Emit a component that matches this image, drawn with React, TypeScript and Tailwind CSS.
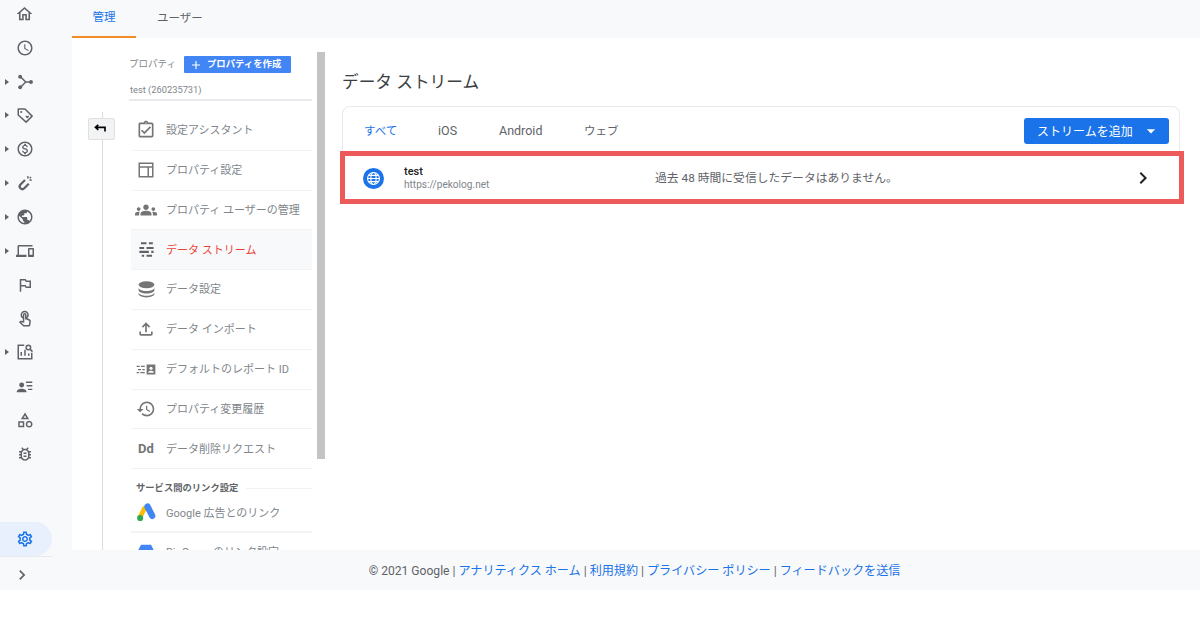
import type { ReactNode } from "react";
import {
  MdAccessTime,
  MdAdd,
  MdArrowDropDown,
  MdChevronRight,
  MdGroups,
  MdHistory,
  MdOutlineAssignmentTurnedIn,
  MdOutlineBugReport,
  MdOutlineCategory,
  MdOutlineDevices,
  MdOutlineFileUpload,
  MdOutlineHome,
  MdOutlineMonetizationOn,
  MdOutlineOutlinedFlag,
  MdOutlineSettings,
  MdOutlineTouchApp,
  MdPublic,
} from "react-icons/md";

const fontStack = "font-['Roboto','Noto_Sans_CJK_JP',sans-serif]";

function BranchIcon() {
  return (
    <svg viewBox="0 0 24 24" className="size-[18px]" fill="none" stroke="#5f6368" strokeWidth="2">
      <path d="M6 5l7 7-7 7M13 12h7" />
      <circle cx="5.500" cy="5" r="2.600" fill="#5f6368" stroke="none" />
      <circle cx="5.500" cy="19" r="2.600" fill="#5f6368" stroke="none" />
      <circle cx="20" cy="12" r="2.600" fill="#5f6368" stroke="none" />
    </svg>
  );
}

function TagIcon() {
  return (
    <svg viewBox="0 0 24 24" className="size-[18px]" fill="none" stroke="#5f6368" strokeWidth="2">
      <path d="M3 4h9l9.500 9.500-8 8L3 12z" strokeLinejoin="round" />
      <circle cx="7" cy="8" r="1.400" fill="#5f6368" stroke="none" />
      <path d="M13.500 12.500l1.500 1 1.500-1 1 1.500-2.500 2.500-2.500-2.500z" fill="#5f6368" stroke="none" />
    </svg>
  );
}

function MagnetIcon() {
  return (
    <svg viewBox="0 0 24 24" className="size-[18px]" fill="none" stroke="#5f6368" strokeWidth="3">
      <path d="M12 8l-6 6a3.500 3.500 0 0 0 5 5l6-6" />
      <path d="M15.500 3l.8 3M21 8.500l-3-.8M20 4l-1.500 1.500" strokeWidth="2" />
    </svg>
  );
}

function ReportSearchIcon() {
  return (
    <svg viewBox="0 0 24 24" className="size-[18px]" fill="none" stroke="#5f6368" strokeWidth="2">
      <path d="M11 3H3v18h18v-8" />
      <path d="M7 17v-5M12 17V9M17 17v-3" />
      <circle cx="16.500" cy="6" r="3" />
      <path d="M19 8.500l3 3" />
    </svg>
  );
}

function AudienceIcon() {
  return (
    <svg viewBox="0 0 24 24" className="size-[17px]" fill="#5f6368">
      <circle cx="8" cy="10" r="3.500" />
      <path d="M1 20c0-3.500 3.500-5 7-5s7 1.500 7 5zM14 5h9v2h-9zM15 10h8v2h-8zM17 15h6v2h-6z" />
    </svg>
  );
}

function LayoutIcon() {
  return (
    <svg viewBox="0 0 24 24" className="size-[18px]" fill="none" stroke="#757575" strokeWidth="2">
      <path d="M3 3h18v18H3zM3 8h18M15 8v13" />
    </svg>
  );
}

function StreamIcon() {
  return (
    <svg viewBox="0 0 24 24" className="size-[19px]" fill="none" stroke="#5f6368" strokeWidth="2.600">
      <path d="M5 4h7M15 4h5M3 10h6M12 10h9M3 15h12M18 15h3M6 20h3M12 20h7" />
    </svg>
  );
}

function DatabaseIcon() {
  return (
    <svg viewBox="0 0 24 24" className="size-[19px]" fill="#757575">
      <ellipse cx="12" cy="6" rx="10" ry="4.500" />
      <path d="M2 9.500c0 2.500 4.500 4.500 10 4.500s10-2 10-4.500v3c0 2.500-4.500 4.500-10 4.500S2 15 2 12.500z" />
      <path d="M2 15.500c0 2.500 4.500 4.500 10 4.500s10-2 10-4.500v2c0 2.800-4.500 4.500-10 4.500S2 20.300 2 17.500z" />
    </svg>
  );
}

function ReportIdIcon() {
  return (
    <svg viewBox="0 0 32 24" className="h-[15px] w-[20px]" fill="#757575">
      <path d="M1 6h5v2H1zM8 6h6v2H8zM3 11h5v2H3zM10 11h4v2h-4zM1 16h4v2H1zM7 16h7v2H7z" />
      <path d="M17 4h14v16H17z" />
      <circle cx="24" cy="10" r="2.500" fill="#fff" />
      <path d="M19.500 17c0-2 2.500-3 4.500-3s4.500 1 4.500 3z" fill="#fff" />
    </svg>
  );
}

function AdsIcon() {
  return (
    <svg viewBox="0 0 24 24" className="size-[20px]">
      <path d="M8.500 3.500l-6.500 13 5 2.500 6.500-13z" fill="#fbbc04" />
      <path d="M10 5.500a4 4 0 0 1 7-3.500l6 12a3.800 3.800 0 0 1-6.500 3.800z" fill="#4285f4" />
      <circle cx="5" cy="18" r="3.700" fill="#34a853" />
    </svg>
  );
}

function BigQueryIcon() {
  return (
    <svg viewBox="0 0 24 24" className="size-[20px]">
      <path d="M6 2h12l5 10-5 10H6L1 12z" fill="#4285f4" />
    </svg>
  );
}

function GlobeBadge() {
  return (
    <svg viewBox="0 0 24 24" className="size-[21px]" fill="none">
      <circle cx="12" cy="12" r="12" fill="#1a73e8" />
      <g stroke="#fff" strokeWidth="1.300">
        <circle cx="12" cy="12" r="6.800" />
        <ellipse cx="12" cy="12" rx="3" ry="6.800" />
        <path d="M5.200 12h13.600M6.200 8.500h11.600M6.200 15.500h11.600" />
      </g>
    </svg>
  );
}

type SideItem = { icon: ReactNode; expand?: boolean };

const sideClass = "size-[18px] text-[#5f6368]";

const sideItems: SideItem[] = [
  { icon: <MdOutlineHome className="size-[20px] text-[#5f6368]" /> },
  { icon: <MdAccessTime className={sideClass} /> },
  { icon: <BranchIcon />, expand: true },
  { icon: <TagIcon />, expand: true },
  { icon: <MdOutlineMonetizationOn className={sideClass} />, expand: true },
  { icon: <MagnetIcon />, expand: true },
  { icon: <MdPublic className={sideClass} />, expand: true },
  { icon: <MdOutlineDevices className={sideClass} />, expand: true },
  { icon: <MdOutlineOutlinedFlag className={sideClass} /> },
  { icon: <MdOutlineTouchApp className={sideClass} /> },
  { icon: <ReportSearchIcon />, expand: true },
  { icon: <AudienceIcon /> },
  { icon: <MdOutlineCategory className={sideClass} /> },
  { icon: <MdOutlineBugReport className={sideClass} /> },
];

const navClass = "size-[20px] text-[#757575]";

const navItems: { label: string; icon: ReactNode; active?: boolean }[] = [
  { label: "設定アシスタント", icon: <MdOutlineAssignmentTurnedIn className={navClass} /> },
  { label: "プロパティ設定", icon: <LayoutIcon /> },
  { label: "プロパティ ユーザーの管理", icon: <MdGroups className="size-[22px] text-[#757575]" /> },
  { label: "データ ストリーム", icon: <StreamIcon />, active: true },
  { label: "データ設定", icon: <DatabaseIcon /> },
  { label: "データ インポート", icon: <MdOutlineFileUpload className={navClass} /> },
  { label: "デフォルトのレポート ID", icon: <ReportIdIcon /> },
  { label: "プロパティ変更履歴", icon: <MdHistory className={navClass} /> },
  {
    label: "データ削除リクエスト",
    icon: <span className="text-[13px] font-bold text-[#757575]">Dd</span>,
  },
];

function Sidebar() {
  return (
    <aside className="flex h-full w-[72px] shrink-0 flex-col">
      <div className="-mt-[3px] flex flex-col">
        {sideItems.map((item, i) => (
          <div key={i} className="relative flex h-[33.850px] items-center pl-[15px]">
            {item.expand && (
              <span className="absolute left-[5px] h-0 w-0 border-y-[3.500px] border-l-[4px] border-y-transparent border-l-[#5f6368]" />
            )}
            <span className="flex w-[19px] items-center justify-center">{item.icon}</span>
          </div>
        ))}
      </div>
      <div className="mt-auto">
        <div className="flex h-[34px] w-[52px] items-center rounded-r-[17px] bg-[#e8f0fe] pl-[16px]">
          <MdOutlineSettings className="size-[18px] text-[#1a73e8]" />
        </div>
        <div className="flex h-[34px] w-[52px] items-center border-t border-[#e8eaed] pl-[12px] pt-[3px]">
          <MdChevronRight className="size-[20px] text-[#5f6368]" />
        </div>
      </div>
    </aside>
  );
}

function PropertyNav() {
  return (
    <div className="relative flex w-[254px] shrink-0 overflow-hidden">
      {/* vertical rail and back button sit over the column */}
      <div className="absolute bottom-0 left-[30px] top-[74px] w-px bg-[#dadce0]" />
      <button className="absolute left-[16px] top-[80px] flex h-[22px] w-[27px] items-center justify-center rounded-[2px] border border-[#e0e0e0] bg-[#f1f3f4] pr-[3px]">
        <svg viewBox="0 0 16 12" className="h-[10px] w-[14px]" fill="none" stroke="#000" strokeWidth="2">
          <path d="M15 4H3M6 1L2.500 4 6 7M14 3.500V9" />
        </svg>
      </button>
      <div className="absolute right-[1px] top-[14px] h-[407px] w-[8px] bg-[#c4c4c4]" />

      <div className="ml-[57px] w-[183px] pt-[18px]">
        <div className="flex items-center">
          <span className="text-[9.500px] text-[#80868b]">プロパティ</span>
          <button className="ml-[8px] flex h-[17px] w-[107px] items-center rounded-[1px] bg-[#4285f4] pl-[5px] text-[9.400px] font-bold text-white">
            <MdAdd className="mr-[4px] size-[14px]" />
            プロパティを作成
          </button>
        </div>
        <div className="mt-[10px] h-[18px] border-b-2 border-[#e8eaed] pl-px text-[9.300px] leading-[14px] text-[#80868b]">
          test (260235731)
        </div>
        <ul className="ml-[2px] mt-[10px]">
          {navItems.map((item) => (
            <li
              key={item.label}
              className={`flex h-[39.800px] items-center border-b border-[#f1f3f4] ${item.active ? "bg-[#f8f9fa]" : ""}`}
            >
              <span className="flex w-[35px] justify-center pr-[5px]">{item.icon}</span>
              <span
                className={`pt-[2px] text-[11px] ${item.active ? "text-[#ea4335]" : "text-[#80868b]"}`}
              >
                {item.label}
              </span>
            </li>
          ))}
        </ul>
        <div className="ml-[7px] mt-[12px] flex items-center gap-[8px]">
          <span className="whitespace-nowrap text-[9.300px] font-bold text-[#5f6368]">
            サービス間のリンク設定
          </span>
          <span className="h-px flex-1 bg-[#f1f3f4]" />
        </div>
        <ul className="ml-[2px]">
          <li className="flex h-[38px] items-center border-b-2 border-[#f1f3f4] pb-[1px]">
            <span className="flex w-[35px] justify-center pr-[5px]">
              <AdsIcon />
            </span>
            <span className="pt-[3px] text-[11px] text-[#80868b]">Google 広告とのリンク</span>
          </li>
          <li className="flex h-[39px] items-center">
            <span className="flex w-[35px] justify-center pr-[5px]">
              <BigQueryIcon />
            </span>
            <span className="pt-[2px] text-[11px] text-[#80868b]">BigQuery のリンク設定</span>
          </li>
        </ul>
      </div>
    </div>
  );
}

function StreamPanel() {
  return (
    <section className="min-w-0 flex-1 pl-[16px] pr-[20px] pt-[32px]">
      <h1 className="text-[16.700px] leading-[26px] text-[#3c4043]">データ ストリーム</h1>
      <div className="mt-[10px] rounded-t-[8px] border-x border-t border-[#e8eaed]">
        <div className="flex h-[44px] items-center pl-[21px] pr-[10px] pt-[4px] text-[11.500px] text-[#5f6368]">
          <span className="w-[74px] pt-[1px] text-[#1a73e8]">すべて</span>
          <span className="w-[61px] pt-[1px] text-[12.500px]">iOS</span>
          <span className="w-[85px] pt-[1px] text-[12.500px]">Android</span>
          <span className="pt-[1px]">ウェブ</span>
          <button className="ml-auto flex h-[26px] w-[145px] items-center gap-[8px] rounded-[3px] bg-[#1a73e8] pl-[13px] text-[12px] text-white">
            <span className="pt-[1px]">ストリームを追加</span>
            <MdArrowDropDown className="size-[20px]" />
          </button>
        </div>
        <div className="-ml-[3px] -mr-[5px] flex h-[53px] items-center border-[5px] border-[#ec5a5a] bg-white pl-[18px] pr-[24px] pt-[1px]">
          <GlobeBadge />
          <div className="ml-[20px] w-[251px]">
            <div className="text-[11px] font-medium leading-[13px] text-[#202124]">test</div>
            <div className="text-[10.100px] leading-[13px] text-[#80868b]">https://pekolog.net</div>
          </div>
          <span className="pt-[2px] text-[11.800px] text-[#5f6368]">過去 48 時間に受信したデータはありません。</span>
          <MdChevronRight className="ml-auto size-[24px] text-[#202124]" />
        </div>
      </div>
    </section>
  );
}

export default function App() {
  return (
    <div className={`h-[630px] w-[1200px] overflow-hidden bg-white ${fontStack}`}>
      <div className="flex h-[590px] bg-[#f8f9fa]">
        <Sidebar />
        <main className="flex min-w-0 flex-1 flex-col">
          <nav className="flex h-[38px] shrink-0 text-[11.500px]">
            <div className="flex w-[64px] items-center justify-center border-b-2 border-[#f28c28] text-[#1a73e8]">
              管理
            </div>
            <div className="ml-[21px] flex items-center text-[#5f6368]">ユーザー</div>
          </nav>
          <div className="flex min-h-0 flex-1 bg-white">
            <PropertyNav />
            <StreamPanel />
          </div>
          <footer className="flex h-[40px] shrink-0 items-center justify-center pr-[3px] pt-[3px] text-[12.100px] text-[#5f6368]">
            <span>© 2021 Google |&nbsp;</span>
            <a className="text-[#1a73e8]">アナリティクス ホーム</a>
            <span>&nbsp;|&nbsp;</span>
            <a className="text-[#1a73e8]">利用規約</a>
            <span>&nbsp;|&nbsp;</span>
            <a className="text-[#1a73e8]">プライバシー ポリシー</a>
            <span>&nbsp;|&nbsp;</span>
            <a className="text-[#1a73e8]">フィードバックを送信</a>
          </footer>
        </main>
      </div>
    </div>
  );
}
